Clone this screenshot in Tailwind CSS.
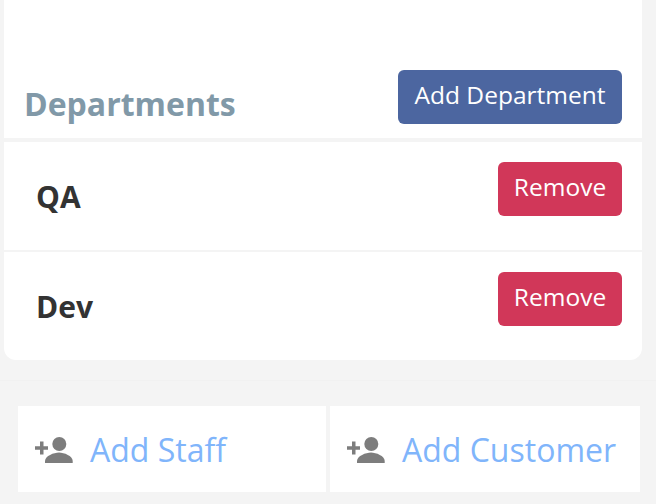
<!DOCTYPE html>
<html lang="en">

<head>
    <meta charset="UTF-8">
    <title>Departments</title>
    <script src="https://cdn.jsdelivr.net/npm/@tailwindcss/browser@4"></script>
</head>

<body class="bg-[#f4f4f4] font-['Open_Sans',sans-serif] overflow-hidden">
    <div class="w-[656px] h-[504px] flex flex-col">

        <div class="ml-1 w-[638px] h-[360px] bg-white rounded-b-xl flex flex-col shrink-0">
            <div class="h-[142px] flex items-end justify-between pl-5 pr-5 pb-[14px] border-b-4 border-[#f4f4f4] shrink-0">
                <h2 class="text-[32px] leading-[40px] font-bold text-[#8199a8]">Departments</h2>
                <button class="w-[224px] h-[54px] pb-1 rounded-md bg-[#4c66a0] text-white text-[24.5px] leading-none">Add Department</button>
            </div>
            <div class="h-[110px] flex items-start justify-between pl-8 pr-5 pt-5 border-b-2 border-[#f4f4f4] shrink-0">
                <span class="text-[30px] leading-[70px] font-bold text-[#333]">QA</span>
                <button class="w-[124px] h-[54px] pb-1 rounded-md bg-[#d13759] text-white text-[24.5px] leading-none">Remove</button>
            </div>
            <div class="flex-1 flex items-start justify-between pl-8 pr-5 pt-5">
                <span class="text-[30px] leading-[70px] font-bold text-[#333]">Dev</span>
                <button class="w-[124px] h-[54px] pb-1 rounded-md bg-[#d13759] text-white text-[24.5px] leading-none">Remove</button>
            </div>
        </div>

        <div class="mt-5 border-t border-[#f1f1f1] pt-[25px] pl-[18px] flex gap-1">
            <a class="w-[308px] h-[86px] bg-white flex items-center pl-4 gap-4 text-[32px] text-[#80b5fb]">
                <svg class="w-10 h-10 shrink-0" viewBox="0 0 40 40" fill="#7d7d7d">
                    <circle cx="25.300" cy="15" r="7"/>
                    <path d="M11 34v-2C11 27 20 23.500 25 23.500S38.700 27 38.700 32v2z"/>
                    <path d="M6 12.500h3.500v4.700H14v3.600H9.500v4.700H6v-4.700H1v-3.600h5z"/>
                </svg>
                <span class="translate-y-px">Add Staff</span>
            </a>
            <a class="w-[310px] h-[86px] bg-white flex items-center pl-4 gap-4 text-[32px] text-[#80b5fb]">
                <svg class="w-10 h-10 shrink-0" viewBox="0 0 40 40" fill="#7d7d7d">
                    <circle cx="25.300" cy="15" r="7"/>
                    <path d="M11 34v-2C11 27 20 23.500 25 23.500S38.700 27 38.700 32v2z"/>
                    <path d="M6 12.500h3.500v4.700H14v3.600H9.500v4.700H6v-4.700H1v-3.600h5z"/>
                </svg>
                <span class="translate-y-px">Add Customer</span>
            </a>
        </div>

    </div>
</body>

</html>
